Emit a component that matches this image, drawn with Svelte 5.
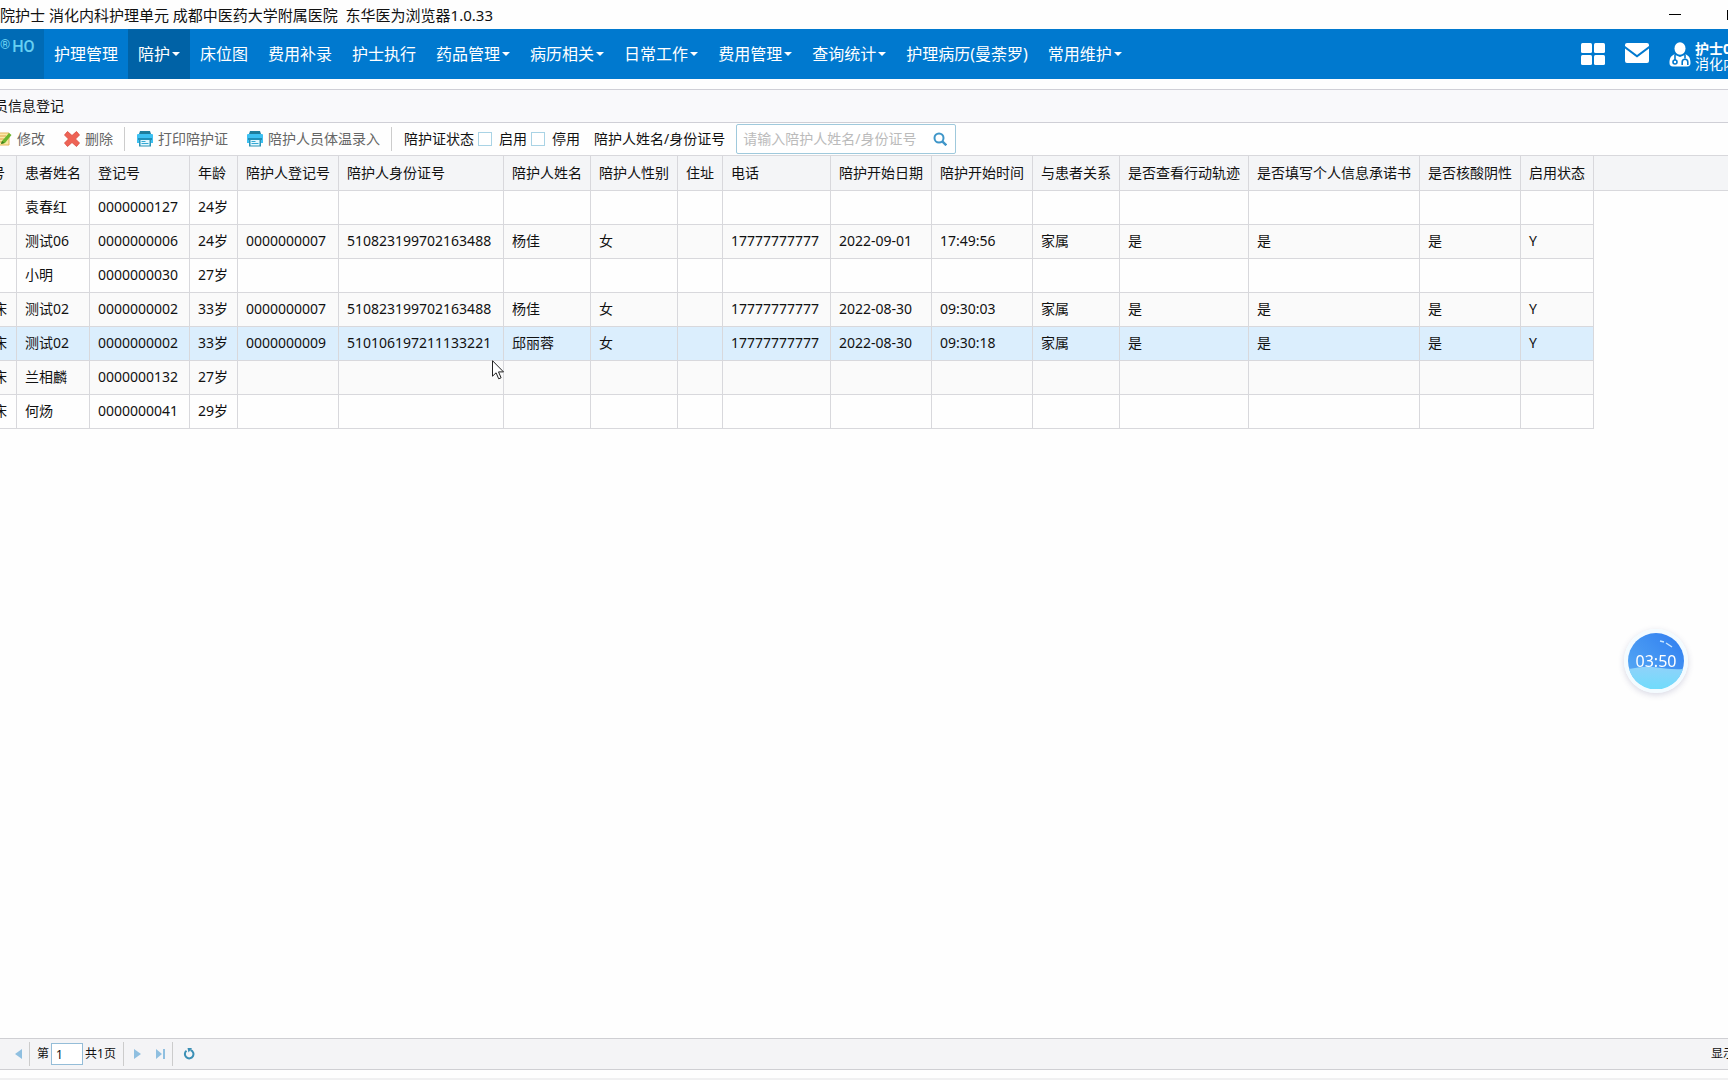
<script lang="ts">
    type Column = { key: string; title: string; width: number };
    type Row = Record<string, string>;

    const menus = [
        { label: '护理管理', sub: false },
        { label: '陪护', sub: true },
        { label: '床位图', sub: false },
        { label: '费用补录', sub: false },
        { label: '护士执行', sub: false },
        { label: '药品管理', sub: true },
        { label: '病历相关', sub: true },
        { label: '日常工作', sub: true },
        { label: '费用管理', sub: true },
        { label: '查询统计', sub: true },
        { label: '护理病历(曼荼罗)', sub: false },
        { label: '常用维护', sub: true }
    ];

    const columns: Column[] = [
        { key: 'bed', title: '号', width: 26 },
        { key: 'name', title: '患者姓名', width: 73 },
        { key: 'regNo', title: '登记号', width: 100 },
        { key: 'age', title: '年龄', width: 48 },
        { key: 'carerNo', title: '陪护人登记号', width: 101 },
        { key: 'carerId', title: '陪护人身份证号', width: 165 },
        { key: 'carerName', title: '陪护人姓名', width: 87 },
        { key: 'sex', title: '陪护人性别', width: 87 },
        { key: 'address', title: '住址', width: 45 },
        { key: 'phone', title: '电话', width: 108 },
        { key: 'date', title: '陪护开始日期', width: 101 },
        { key: 'time', title: '陪护开始时间', width: 101 },
        { key: 'relation', title: '与患者关系', width: 87 },
        { key: 'track', title: '是否查看行动轨迹', width: 129 },
        { key: 'promise', title: '是否填写个人信息承诺书', width: 171 },
        { key: 'covid', title: '是否核酸阴性', width: 101 },
        { key: 'status', title: '启用状态', width: 73 }
    ];

    const yes = { track: '是', promise: '是', covid: '是', status: 'Y' };

    const rows: Row[] = [
        { name: '袁春红', regNo: '0000000127', age: '24岁' },
        {
            name: '测试06', regNo: '0000000006', age: '24岁',
            carerNo: '0000000007', carerId: '510823199702163488', carerName: '杨佳', sex: '女',
            phone: '17777777777', date: '2022-09-01', time: '17:49:56', relation: '家属', ...yes
        },
        { name: '小明', regNo: '0000000030', age: '27岁' },
        {
            bed: '床', name: '测试02', regNo: '0000000002', age: '33岁',
            carerNo: '0000000007', carerId: '510823199702163488', carerName: '杨佳', sex: '女',
            phone: '17777777777', date: '2022-08-30', time: '09:30:03', relation: '家属', ...yes
        },
        {
            bed: '床', name: '测试02', regNo: '0000000002', age: '33岁',
            carerNo: '0000000009', carerId: '510106197211133221', carerName: '邱丽蓉', sex: '女',
            phone: '17777777777', date: '2022-08-30', time: '09:30:18', relation: '家属', ...yes
        },
        { bed: '床', name: '兰相麟', regNo: '0000000132', age: '27岁' },
        { bed: '床', name: '何炀', regNo: '0000000041', age: '29岁' }
    ];

    let activeMenu = $state('陪护');
    let selected = $state(4);
    let enabled = $state(false);
    let disabled = $state(false);
    let keyword = $state('');
    let page = $state('1');
</script>

{#snippet printer()}
    <svg class="icon" viewBox="0 0 16 16" aria-hidden="true">
        <path d="M3 0h10l1 3H2z" fill="#1f7d9c" />
        <path d="M1 3h14a1 1 0 0 1 1 1v8h-3V9H3v3H0V4a1 1 0 0 1 1-1z" fill="#3cc0f2" />
        <path d="M1 7h14v2H1z" fill="#1f8fb8" />
        <path d="M2 9h12v6.500H2z" fill="#2a93b5" />
        <path d="M3.500 9h9v5.500h-9z" fill="#e4f8ff" />
        <path d="M4.500 10h4v1h-4zM4.500 12h7v1h-7z" fill="#35a9d4" />
    </svg>
{/snippet}

<div class="app">
    <header class="titlebar">
        <span>院护士 消化内科护理单元 成都中医药大学附属医院&nbsp; 东华医为浏览器1.0.33</span>
        <div class="window-buttons">
            <button class="minimize" aria-label="最小化"></button>
            <button class="maximize" aria-label="最大化"></button>
        </div>
    </header>

    <nav class="navbar">
        <div class="brand"><sup>®</sup><span>HO</span></div>
        {#each menus as menu}
            <button
                class="menu"
                class:active={menu.label === activeMenu}
                onclick={() => (activeMenu = menu.label)}
            >
                {menu.label}{#if menu.sub}<i class="caret"></i>{/if}
            </button>
        {/each}
        <div class="tools">
            <button aria-label="应用">
                <svg width="24" height="22" viewBox="0 0 24 22" fill="#fff">
                    <rect x="0" y="0" width="11" height="10" rx="1.500" />
                    <rect x="13" y="0" width="11" height="10" rx="1.500" />
                    <rect x="0" y="12" width="11" height="10" rx="1.500" />
                    <rect x="13" y="12" width="11" height="10" rx="1.500" />
                </svg>
            </button>
            <button aria-label="消息">
                <svg width="24" height="22" viewBox="0 0 24 22" fill="#fff">
                    <path d="M2 0h20a2 2 0 0 1 2 2v1L12 12 0 3V2a2 2 0 0 1 2-2z" />
                    <path d="M0 5.500l12 9 12-9V18a2 2 0 0 1-2 2H2a2 2 0 0 1-2-2z" />
                </svg>
            </button>
            <button class="user">
                <svg width="22" height="25" viewBox="0 0 22 25">
                    <ellipse cx="11" cy="6.500" rx="5.500" ry="6.200" fill="#fff" />
                    <path d="M5 12.500C1.500 14 .500 17 .500 21c0 2 1 3.500 3.500 3.500h14c2.500 0 3.500-1.500 3.500-3.500 0-4-1-7-4.500-8.500L11 15z" fill="#fff" />
                    <path d="M6 13v5M16 13v3.500" stroke="#0079cf" stroke-width="1.600" fill="none" />
                    <circle cx="6" cy="20" r="2" stroke="#0079cf" stroke-width="1.600" fill="none" />
                    <path d="M13.200 23v-3a2.800 2.800 0 0 1 5.600 0v3" stroke="#0079cf" stroke-width="1.600" fill="none" />
                </svg>
                <span class="who"><b>护士0</b><span>消化内</span></span>
            </button>
        </div>
    </nav>

    <main class="workspace">
        <h1>员信息登记</h1>

        <div class="toolbar">
            <button class="tool">
                <svg class="icon" viewBox="0 0 16 16" aria-hidden="true">
                    <path d="M0 2h13v12H0z" fill="#fbe9a6" stroke="#e5b45c" />
                    <path d="M2 5h8M2 8h6M2 11h4" stroke="#e0a24c" />
                    <path d="M5 13l1-3 7-8 2.500 2L9 12z" fill="#6cb52d" />
                    <path d="M5 13l1-3 2.500 2z" fill="#3d7a1b" />
                </svg>
                修改
            </button>
            <button class="tool">
                <svg class="icon" viewBox="0 0 16 16" aria-hidden="true">
                    <path d="M3.500.500L8 4.500l4.500-4L15.500 4l-4 4 4 4-3 3.500L8 11.500l-4.500 4L.500 12l4-4-4-4z" fill="#ee6355" stroke="#d9493c" stroke-width=".800" />
                </svg>
                删除
            </button>
            <i class="divider"></i>
            <button class="tool">{@render printer()}打印陪护证</button>
            <button class="tool">{@render printer()}陪护人员体温录入</button>
            <i class="divider"></i>
            <div class="filter">
                <span>陪护证状态</span>
                <label><input type="checkbox" bind:checked={enabled} />启用</label>
                <label><input type="checkbox" bind:checked={disabled} />停用</label>
            </div>
            <label class="keyword" for="keyword">陪护人姓名/身份证号</label>
            <div class="search">
                <input id="keyword" type="text" placeholder="请输入陪护人姓名/身份证号" bind:value={keyword} />
                <button aria-label="查询">
                    <svg width="14" height="14" viewBox="0 0 14 14" fill="none" stroke="#3f96c9" stroke-width="2">
                        <circle cx="6" cy="6" r="4.500" />
                        <path d="M9.300 9.300l4 4" stroke-width="2.400" />
                    </svg>
                </button>
            </div>
        </div>

        <div class="grid">
            <table>
                <colgroup>
                    {#each columns as col}
                        <col style="width: {col.width}px" />
                    {/each}
                    <col />
                </colgroup>
                <thead>
                    <tr>
                        {#each columns as col}
                            <th>{col.title}</th>
                        {/each}
                        <th class="rest"></th>
                    </tr>
                </thead>
                <tbody>
                    {#each rows as row, i}
                        <tr class:selected={i === selected} onclick={() => (selected = i)}>
                            {#each columns as col}
                                <td>{row[col.key] ?? ''}</td>
                            {/each}
                            <td class="rest"></td>
                        </tr>
                    {/each}
                </tbody>
            </table>
        </div>

        <footer class="pager">
            <button aria-label="上一页">
                <svg width="7" height="10" viewBox="0 0 7 10"><path d="M7 0v10L0 5z" fill="#8fbfe0" /></svg>
            </button>
            <i class="divider"></i>
            <label class="page-no">第<input type="text" bind:value={page} /></label>
            <span>共1页</span>
            <i class="divider"></i>
            <button aria-label="下一页">
                <svg width="7" height="10" viewBox="0 0 7 10"><path d="M0 0v10l7-5z" fill="#8fbfe0" /></svg>
            </button>
            <button aria-label="末页">
                <svg width="9" height="10" viewBox="0 0 9 10"><path d="M0 0v10l6-5zM7 0h2v10H7z" fill="#8fbfe0" /></svg>
            </button>
            <i class="divider"></i>
            <button aria-label="刷新">
                <svg width="12" height="12" viewBox="0 0 12 12" fill="none">
                    <path d="M7.500 2A4.300 4.300 0 1 1 3.500 2.700" stroke="#3a8fb5" stroke-width="2" />
                    <path d="M4.500 0h4.500L5.500 4.500z" fill="#3a8fb5" />
                </svg>
            </button>
            <span class="total">显示</span>
        </footer>
    </main>

    <div class="timer">
        <svg width="56" height="56" viewBox="0 0 56 56" aria-hidden="true">
            <defs>
                <linearGradient id="ball" x1="0" y1="1" x2="1" y2="0">
                    <stop offset="0" stop-color="#5aaef5" />
                    <stop offset="1" stop-color="#2f7df0" />
                </linearGradient>
                <linearGradient id="water" x1="0" y1="0" x2="0" y2="1">
                    <stop offset="0" stop-color="#8fd2fa" />
                    <stop offset="1" stop-color="#6fdcfb" />
                </linearGradient>
            </defs>
            <circle cx="28" cy="28" r="28" fill="url(#ball)" />
            <path d="M1 36c8-1 14-3 24-2s20 3 30 2A28 28 0 0 1 1 36z" fill="url(#water)" />
            <path d="M32 8l4 1M38 10l6 4" stroke="#c9e6ff" stroke-width="1.500" />
        </svg>
        <span>03:50</span>
    </div>

    <svg class="pointer" width="13" height="20" viewBox="0 0 13 20" aria-hidden="true">
        <path d="M.500.700v15.500l3.600-3.400 2.600 6 2.400-1-2.600-5.900h5z" fill="#fff" stroke="#222" />
    </svg>
</div>

<style>
    :global(body) {
        margin: 0;
    }

    .app {
        position: relative;
        display: flex;
        flex-direction: column;
        box-sizing: border-box;
        min-height: 100vh;
        overflow: hidden;
        border-bottom: 2px solid #f0f0f1;
        background: #fefefe;
        color: #111;
        font: 14px/20px "Noto Sans", "Noto Sans CJK SC", sans-serif;
    }

    button {
        display: flex;
        align-items: center;
        padding: 0;
        border: 0;
        background: none;
        color: inherit;
        font: inherit;
        white-space: nowrap;
        cursor: pointer;
    }

    input {
        box-sizing: border-box;
        margin: 0;
        color: inherit;
        font: inherit;
    }

    svg {
        display: block;
        flex: none;
    }

    .titlebar {
        display: flex;
        justify-content: space-between;
        align-items: center;
        height: 29px;
        font-size: 15px;
        white-space: nowrap;
    }

    .window-buttons {
        display: flex;
        align-items: center;
        gap: 46px;
        width: 59px;
    }

    .minimize {
        flex: none;
        width: 12px;
        height: 1px;
        background: #000;
    }

    .maximize {
        flex: none;
        width: 10px;
        height: 10px;
        border: 1px solid #000;
    }

    .navbar {
        display: flex;
        height: 50px;
        background: #0079cf;
        color: #fff;
        font-size: 16px;
    }

    .brand {
        display: flex;
        box-sizing: border-box;
        gap: 2px;
        width: 44px;
        padding-top: 8px;
        background: #006bb5;
        color: #67d0f2;
        font-family: Roboto, sans-serif;
        font-weight: 500;
    }

    .brand sup {
        font-size: 13px;
        line-height: 16px;
    }

    .menu {
        padding: 0 10px;
    }

    .menu.active {
        background: #0062a6;
    }

    .caret {
        margin-left: 2px;
        border: 4px solid transparent;
        border-top-color: #fff;
        border-bottom: 0;
    }

    .tools {
        display: flex;
        align-items: center;
        gap: 20px;
        width: 147px;
        margin-left: auto;
    }

    .user {
        gap: 4px;
        font-size: 14px;
        line-height: 15px;
        text-align: left;
    }

    .who {
        display: flex;
        flex-direction: column;
        padding-top: 4px;
    }

    /* the work area is scrolled slightly to the right */
    .workspace {
        display: flex;
        flex: 1;
        flex-direction: column;
        margin: 10px 0 8px -9px;
    }

    h1 {
        margin: 0;
        padding: 6px 3px;
        border: solid #cfcfd6;
        border-width: 1px 0;
        background: #f9f9fb;
        font-size: 14px;
        font-weight: 400;
        line-height: 20px;
    }

    .toolbar {
        display: flex;
        align-items: center;
        height: 32px;
        padding-left: 5px;
        white-space: nowrap;
    }

    .tool {
        gap: 5px;
        margin-right: 19px;
        color: #666;
    }

    .icon {
        width: 16px;
        height: 16px;
    }

    .divider {
        width: 1px;
        height: 24px;
        background: #ccc;
    }

    .toolbar .divider {
        margin-left: -8px;
        margin-right: 12px;
    }

    .filter,
    .filter label {
        display: flex;
        align-items: center;
        gap: 4px;
    }

    .filter label {
        gap: 7px;
    }

    .filter input {
        appearance: none;
        width: 14px;
        height: 14px;
        border: 1px solid #a9d3e5;
        background: #fff;
    }

    .filter input:checked {
        background: #40a2de;
    }

    .keyword {
        margin: 0 11px 0 14px;
    }

    .search {
        display: flex;
        box-sizing: border-box;
        width: 220px;
        height: 30px;
        border: 1px solid #9fc9dc;
        border-radius: 2px;
        background: #fff;
    }

    .search input {
        flex: 1;
        min-width: 0;
        padding: 0 6px;
        border: 0;
        outline: 0;
        background: none;
    }

    .search input::placeholder {
        color: #bbb;
    }

    .search button {
        padding-right: 8px;
    }

    .grid {
        flex: 1;
    }

    table {
        width: 100%;
        border-spacing: 0;
        table-layout: fixed;
    }

    th,
    td {
        box-sizing: border-box;
        height: 34px;
        padding: 0 8px;
        border: solid #d8d8dc;
        border-width: 0 1px 1px 0;
        font-weight: 400;
        text-align: left;
        white-space: nowrap;
    }

    th {
        height: 36px;
        border-top-width: 1px;
        background: #f4f5f7;
    }

    td {
        padding-bottom: 2px;
    }

    th:first-child {
        padding: 0;
    }

    td:first-child {
        padding: 0 2px 2px;
    }

    tbody tr:nth-child(even) {
        background: #fafafa;
    }

    tbody tr.selected {
        background: #dbeefd;
    }

    th.rest {
        border-right-width: 0;
    }

    td.rest {
        border: 0;
        background: #fefefe;
    }

    .pager {
        display: flex;
        align-items: center;
        box-sizing: border-box;
        height: 32px;
        padding-left: 24px;
        border: solid #cfcfd3;
        border-width: 1px 0;
        background: #f4f4f6;
        font-size: 12px;
        white-space: nowrap;
    }

    .pager .divider {
        margin: 0 7px;
    }

    .pager .divider + button {
        margin-left: 3px;
    }

    .pager button + button {
        margin-left: 15px;
    }

    .page-no {
        display: flex;
        align-items: center;
        gap: 2px;
        margin-right: 2px;
    }

    .page-no input {
        width: 32px;
        height: 22px;
        padding: 0 4px;
        border: 1px solid #94bdd8;
        background: #fff;
    }

    .total {
        width: 17px;
        margin-left: auto;
    }

    .timer {
        position: fixed;
        top: 629px;
        right: 40px;
        display: grid;
        place-items: center;
        border: 4px solid #f3fbff;
        border-radius: 50%;
        box-shadow: 0 2px 6px rgba(60, 60, 120, 0.2);
        color: #fff;
        font-size: 16px;
    }

    .timer > * {
        grid-area: 1 / 1;
    }

    .pointer {
        position: absolute;
        top: 360px;
        left: 492px;
    }
</style>
